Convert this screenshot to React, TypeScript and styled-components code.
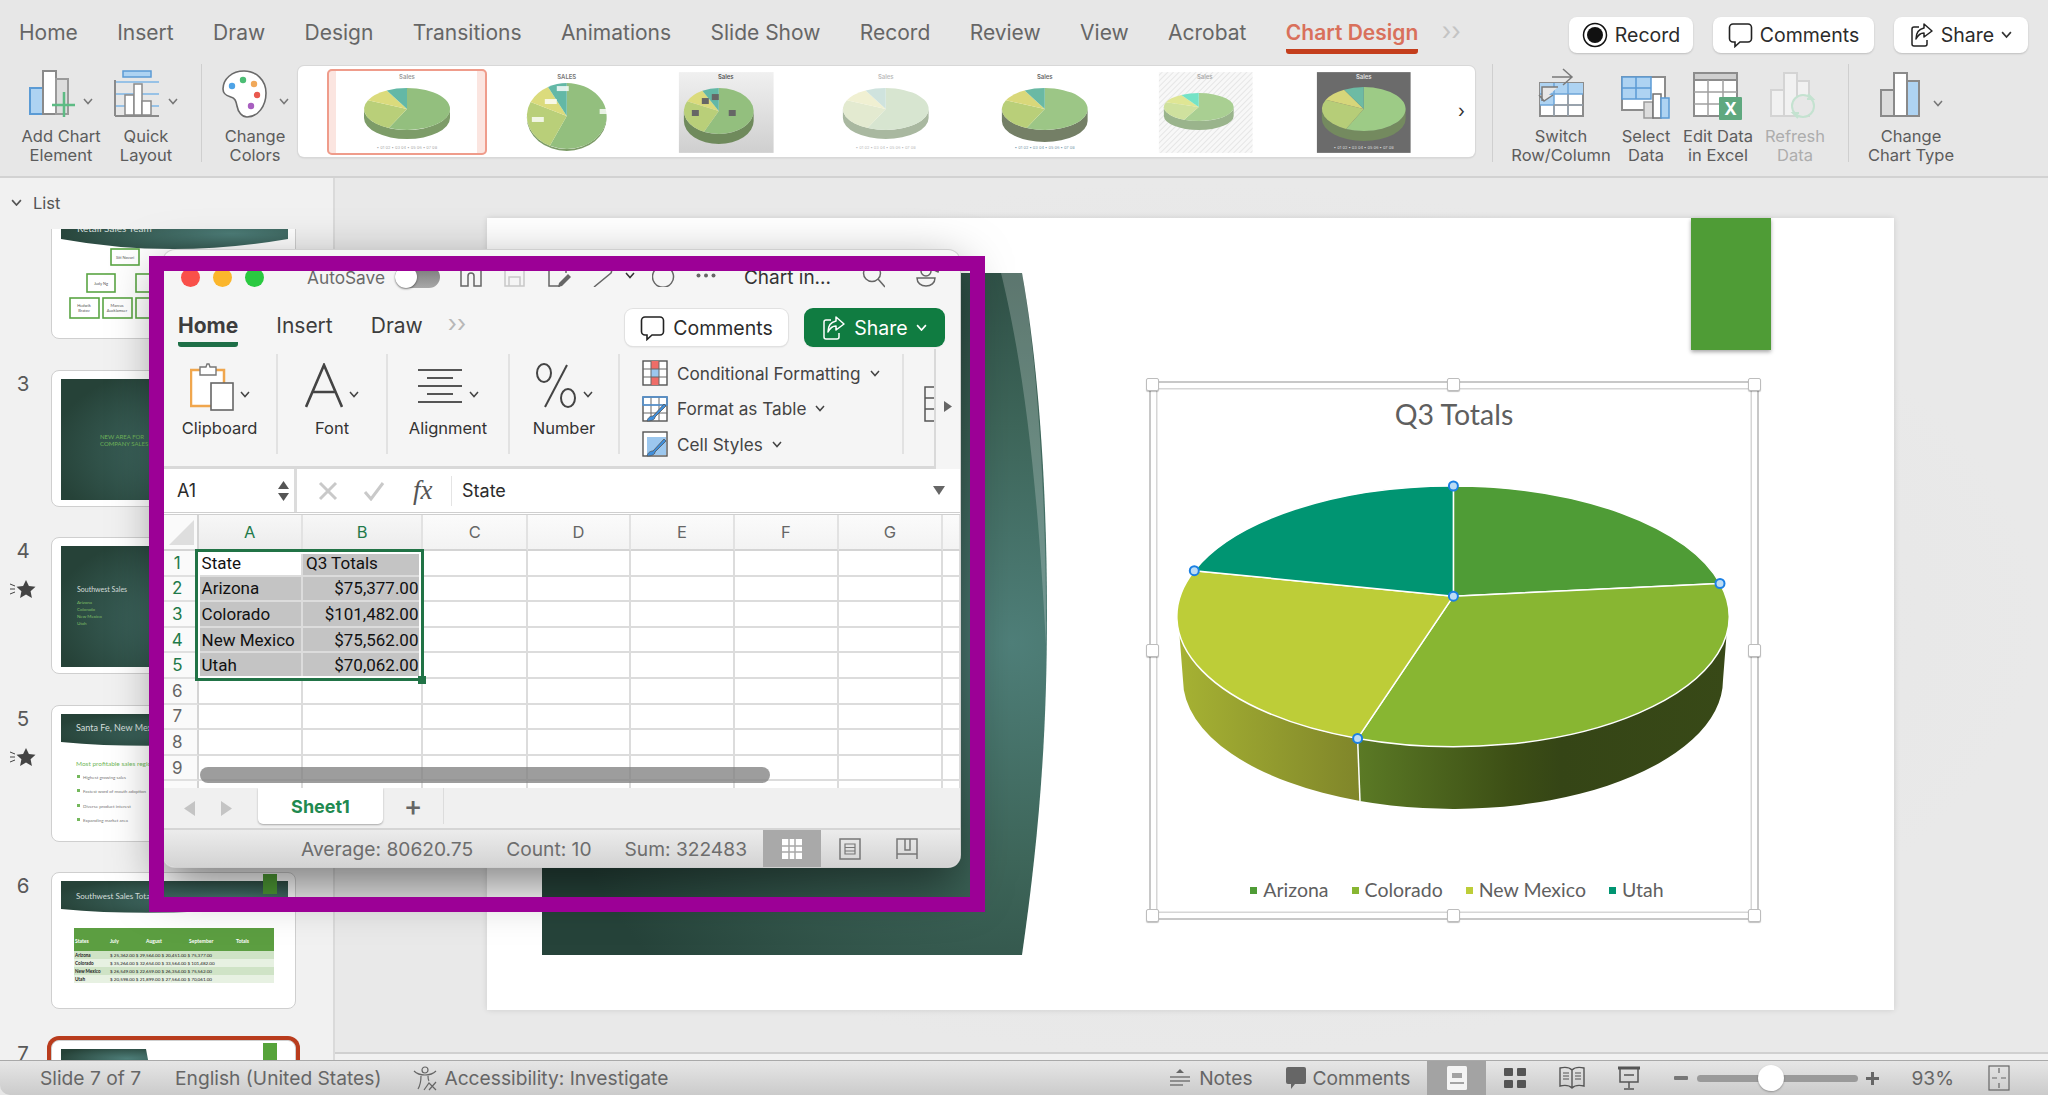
import styled, { createGlobalStyle } from 'styled-components'

const sans = 'Inter, Roboto, "Liberation Sans", sans-serif'

const GlobalStyle = createGlobalStyle`
  html, body {
    margin: 0;
    padding: 0;
    background: #e7e7e7;
    overflow: hidden;
  }
  * {
    box-sizing: border-box;
  }
`

const Page = styled.div`
  position: relative;
  width: 2048px;
  height: 1095px;
  display: flex;
  flex-direction: column;
  overflow: hidden;
  font-family: ${sans};
  color: #5c5c5c;
  background: #e7e7e7;
`

/* ---------- powerpoint top ---------- */

const TabRow = styled.div`
  height: 55px;
  flex: none;
  display: flex;
  align-items: flex-start;
  padding: 0 20px 0 19px;
`

const TabList = styled.div`
  display: flex;
  gap: 39.4px;
  flex: 1;
  padding-top: 20px;
`

const Tab = styled.div<{ $active?: boolean }>`
  position: relative;
  height: 34px;
  font-size: 21px;
  line-height: 25px;
  white-space: nowrap;
  color: ${(p) => (p.$active ? '#d9705b' : '#666')};
  font-weight: ${(p) => (p.$active ? 600 : 400)};
  border-bottom: ${(p) => (p.$active ? '5px solid #c43e1c' : '5px solid transparent')};
  border-radius: 0 0 3px 3px;
`

const MoreTabs = styled.div`
  color: #c4c4c4;
  font-size: 25px;
  line-height: 23px;
  margin-left: -16px;
`

const TopActions = styled.div`
  display: flex;
  gap: 20px;
  padding-top: 17px;
`

const PillButton = styled.div<{ $w: number }>`
  width: ${(p) => p.$w}px;
  height: 36px;
  display: flex;
  align-items: center;
  justify-content: center;
  gap: 7px;
  background: #fff;
  border-radius: 8px;
  box-shadow: 0 1px 2px rgba(0, 0, 0, 0.18);
  color: #2b2b2b;
  font-size: 19.5px;
`

const Ribbon = styled.div`
  height: 123px;
  flex: none;
  display: flex;
  align-items: flex-start;
  padding: 11px 0 0 21px;
  border-bottom: 2px solid #d2d2d2;
`

const RibbonDivider = styled.div<{ $ml: number; $mr: number }>`
  width: 1px;
  height: 98px;
  flex: none;
  margin: -2px ${(p) => p.$mr}px 0 ${(p) => p.$ml}px;
  background: #cfcfcf;
`

const RibbonBtn = styled.div<{ $w: number; $ml?: number; $off?: boolean }>`
  width: ${(p) => p.$w}px;
  margin-left: ${(p) => p.$ml || 0}px;
  flex: none;
  display: flex;
  flex-direction: column;
  align-items: center;
  color: ${(p) => (p.$off ? '#adadad' : '#5c5c5c')};
`

const RibbonIcon = styled.div<{ $top?: number }>`
  height: 61px;
  padding-top: ${(p) => p.$top ?? 4}px;
  display: flex;
  align-items: flex-start;
  justify-content: center;
`

const RibbonLabel = styled.div`
  font-size: 16.5px;
  line-height: 19px;
  text-align: center;
  white-space: nowrap;
`

const Gallery = styled.div`
  width: 1177px;
  height: 91px;
  margin-left: 15px;
  flex: none;
  display: flex;
  align-items: center;
  position: relative;
  padding-left: 29px;
  background: #fff;
  border-radius: 6px;
  box-shadow: 0 0 0 1px #d8d8d8, 0 1px 2px rgba(0, 0, 0, 0.15);
`

const GalleryCell = styled.div<{ $selected?: boolean }>`
  width: 159.5px;
  height: 86px;
  flex: none;
  padding: ${(p) => (p.$selected ? '0 9px' : '0')};
  background: ${(p) => (p.$selected ? '#fbe5e0' : 'transparent')};
  outline: ${(p) => (p.$selected ? '2px solid #ef9c8b' : 'none')};
  outline-offset: -2px;
  border-radius: 5px;
  display: flex;
  align-items: center;
  justify-content: center;
`

const GalleryNext = styled.div`
  position: absolute;
  right: 10px;
  top: 36px;
  color: #333;
  font-size: 18px;
  line-height: 18px;
`

/* ---------- body ---------- */

const Body = styled.div`
  flex: 1;
  min-height: 0;
  display: flex;
`

const SidePanel = styled.div`
  width: 335px;
  flex: none;
  display: flex;
  flex-direction: column;
  background: #f1f1f1;
  border-right: 2px solid #dadada;
`

const ListHeader = styled.div`
  height: 51px;
  flex: none;
  display: flex;
  align-items: center;
  gap: 11px;
  padding: 0 0 2px 11px;
  font-size: 16.5px;
  color: #555;
`

const SlideScroller = styled.div`
  flex: 1;
  min-height: 0;
  overflow: hidden;
`

const SlideList = styled.div`
  margin-top: -27px;
  display: flex;
  flex-direction: column;
  gap: 30.5px;
`

const SlideRow = styled.div`
  display: flex;
  height: 137px;
  flex: none;
`

const SlideNum = styled.div`
  width: 51px;
  flex: none;
  display: flex;
  flex-direction: column;
  align-items: center;
  padding: 2px 5px 0 0;
  font-size: 20.5px;
  line-height: 24px;
  color: #595959;
`

const SlideCard = styled.div<{ $selected?: boolean }>`
  width: 245px;
  height: 137px;
  padding: 8px 9px;
  background: #fff;
  border-radius: 8px;
  border: 1px solid #cfcfcf;
  box-shadow: ${(p) => (p.$selected ? '0 0 0 4px #b93c1d' : 'none')};
`

const StarMark = styled.div`
  display: flex;
  align-items: center;
  margin-top: 17px;
`

const ThumbSvg = styled.svg`
  display: block;
  overflow: visible;
`

const Main = styled.div`
  flex: 1;
  min-width: 0;
  display: flex;
  flex-direction: column;
  background: radial-gradient(ellipse at center, #e2e2e2 0%, #e9e9e9 70%);
`

const Canvas = styled.div`
  flex: 1;
  padding: 40px 0 0 152px;
`

const NotesEdge = styled.div`
  height: 8px;
  flex: none;
  background: #f1f1f1;
  border-top: 2px solid #d0d0d0;
`

const Slide = styled.div`
  position: relative;
  width: 1407px;
  height: 792px;
  background: #fff;
  box-shadow: 0 0 6px rgba(0, 0, 0, 0.12);
`

const SlideShape = styled.svg`
  position: absolute;
  left: 55px;
  top: 55px;
`

const GreenTab = styled.div`
  position: absolute;
  left: 1204px;
  top: 0;
  width: 80px;
  height: 132px;
  background: #4f9c36;
  box-shadow: 0 2px 4px rgba(0, 0, 0, 0.35);
`

const ChartFrame = styled.div`
  position: absolute;
  left: 662px;
  top: 163px;
  width: 610px;
  height: 539px;
  display: flex;
  flex-direction: column;
  align-items: center;
  background: #fff;
  border: 2px solid #c8c8c8;
  box-shadow: inset 0 0 0 5px #fff, inset 0 0 0 6.5px #d6d6d6;
`

const ChartTitle = styled.div`
  height: 85px;
  flex: none;
  padding-top: 11px;
  font-family: Lato, ${sans};
  font-size: 28.5px;
  line-height: 40px;
  color: #5f5f5f;
`

const Legend = styled.div`
  margin-top: 60px;
  display: flex;
  align-items: center;
  padding-left: 6px;
  gap: 23px;
`

const LegendItem = styled.div`
  display: flex;
  align-items: center;
  gap: 6px;
  font-family: Lato, ${sans};
  font-size: 19.5px;
  line-height: 24px;
  color: #5f5f5f;
`

const LegendSwatch = styled.span<{ $c: string }>`
  width: 7px;
  height: 7px;
  background: ${(p) => p.$c};
`

const HandleLayer = styled.div`
  position: absolute;
  inset: 2px;
`

const Handle = styled.div<{ $x: number; $y: number }>`
  position: absolute;
  left: ${(p) => p.$x}%;
  top: ${(p) => p.$y}%;
  width: 13px;
  height: 13px;
  margin: -7px 0 0 -7px;
  background: #fff;
  border: 1px solid #bdbdbd;
  border-radius: 2px;
  box-shadow: 0 1px 1px rgba(0, 0, 0, 0.25);
`

const StatusBar = styled.div`
  height: 35px;
  flex: none;
  display: flex;
  align-items: center;
  position: relative;
  z-index: 2;
  padding-left: 40px;
  background: linear-gradient(#e6e6e6, #cbcbcb);
  border-top: 1px solid #a9a9a9;
  border-radius: 0 0 0 10px;
  font-size: 19.2px;
  color: #666;
`

const StatusText = styled.div<{ $ml?: number }>`
  margin-left: ${(p) => p.$ml || 0}px;
  white-space: nowrap;
  display: flex;
  align-items: center;
  gap: 6px;
`

const StatusRight = styled.div`
  margin-left: auto;
  height: 100%;
  display: flex;
  align-items: center;
`

const ViewBox = styled.div<{ $w: number; $active?: boolean; $ml?: number; $mr?: number }>`
  width: ${(p) => p.$w}px;
  margin-left: ${(p) => p.$ml || 0}px;
  margin-right: ${(p) => p.$mr || 0}px;
  height: 100%;
  display: flex;
  align-items: center;
  justify-content: center;
  background: ${(p) => (p.$active ? '#a3a3a3' : 'transparent')};
`

const ZoomTrack = styled.div`
  position: relative;
  width: 161px;
  height: 7px;
  margin: 0 8px 0 9px;
  border-radius: 4px;
  background: #9a9a9a;
`

const ZoomKnob = styled.div`
  position: absolute;
  left: 61px;
  top: -10px;
  width: 26px;
  height: 26px;
  border-radius: 50%;
  background: #fff;
  box-shadow: 0 1px 2px rgba(0, 0, 0, 0.3);
`

/* ---------- excel window ---------- */

const ExcelWindow = styled.div`
  position: absolute;
  left: 163px;
  top: 250px;
  width: 797px;
  height: 617px;
  display: flex;
  flex-direction: column;
  overflow: hidden;
  background: #f5f5f5;
  border-radius: 12px;
  box-shadow: 0 0 0 1px #cfcfcf;
`

const WindowShadow = styled.div`
  position: absolute;
  left: 163px;
  top: 250px;
  width: 797px;
  height: 617px;
  border-radius: 12px;
  box-shadow: 0 18px 50px rgba(0, 0, 0, 0.5);
`

const PurpleFrame = styled.div`
  position: absolute;
  left: 149px;
  top: 256px;
  width: 836px;
  height: 656px;
  border: 15px solid #9c0096;
  pointer-events: none;
`

const TitleBar = styled.div`
  height: 54px;
  flex: none;
  display: flex;
  align-items: center;
  padding: 0 0 0 18px;
`

const Light = styled.span<{ $c: string }>`
  width: 19px;
  height: 19px;
  margin-right: 13px;
  border-radius: 50%;
  background: ${(p) => p.$c};
`

const AutoSave = styled.div`
  margin-left: 30px;
  font-size: 17.3px;
  color: #6a6a6a;
`

const Toggle = styled.div`
  position: relative;
  width: 45px;
  height: 22px;
  margin: 0 20px 0 10px;
  border-radius: 11px;
  background: linear-gradient(#777, #a8a8a8);
`

const ToggleKnob = styled.div`
  position: absolute;
  left: 0;
  top: 0;
  width: 22px;
  height: 22px;
  border-radius: 50%;
  background: #fff;
  box-shadow: 0 1px 2px rgba(0, 0, 0, 0.5);
`

const TitleIcons = styled.div`
  display: flex;
  align-items: center;
  gap: 21px;
  margin-bottom: 4px;
`

const DocTitle = styled.div`
  margin: 0 31px 0 28px;
  font-size: 19px;
  color: #333;
  white-space: nowrap;
`

const XTabRow = styled.div`
  height: 45px;
  flex: none;
  display: flex;
  align-items: flex-start;
  padding: 5px 0 0 15px;
`

const XTab = styled.div<{ $active?: boolean }>`
  height: 38px;
  margin-right: 38px;
  padding-top: 5px;
  font-size: 21px;
  line-height: 24px;
  font-weight: ${(p) => (p.$active ? 700 : 400)};
  color: #3d3d3d;
  border-bottom: 5px solid ${(p) => (p.$active ? '#1e6f47' : 'transparent')};
  border-radius: 0 0 3px 3px;
`

const XMore = styled.div`
  margin-left: -13px;
  padding-top: 3px;
  font-size: 24px;
  line-height: 24px;
  color: #b8b8b8;
`

const XActions = styled.div`
  margin-left: auto;
  padding-right: 16px;
  display: flex;
  gap: 17px;
`

const XButton = styled.div<{ $w: number; $green?: boolean }>`
  width: ${(p) => p.$w}px;
  height: 37px;
  display: flex;
  align-items: center;
  justify-content: center;
  gap: 8px;
  border-radius: 8px;
  font-size: 19.5px;
  color: ${(p) => (p.$green ? '#fff' : '#2b2b2b')};
  background: ${(p) => (p.$green ? '#107c41' : '#fff')};
  box-shadow: 0 0 0 1px ${(p) => (p.$green ? '#107c41' : '#e1e1e1')}, 0 1px 2px rgba(0, 0, 0, 0.15);
`

const XRibbonRow = styled.div`
  height: 120px;
  flex: none;
  display: flex;
  align-items: center;
`

const XRibbon = styled.div`
  width: 773px;
  height: 100%;
  flex: none;
  display: flex;
  align-items: center;
  overflow: hidden;
  border-right: 2px solid #d9d9d9;
  border-bottom: 3px solid #d9d9d9;
  padding-bottom: 7px;
`

const XRibbonNext = styled.div`
  margin: -6px 0 0 8px;
  display: flex;
`

const XGroup = styled.div<{ $w: number }>`
  width: ${(p) => p.$w}px;
  height: 100px;
  flex: none;
  display: flex;
  flex-direction: column;
  align-items: center;
  border-right: 2px solid #e2e2e2;
`

const XIconArea = styled.div`
  height: 64px;
  padding-top: 9px;
  display: flex;
  align-items: flex-start;
  gap: 6px;
`

const AlignWrap = styled.div`
  padding-top: 5px;
`

const XLabel = styled.div`
  font-size: 16.5px;
  line-height: 20px;
  color: #333;
  white-space: nowrap;
`

const XStyleList = styled.div`
  width: 284px;
  height: 100px;
  flex: none;
  padding: 9px 0 0 22px;
  display: flex;
  flex-direction: column;
  justify-content: center;
  gap: 11.5px;
  border-right: 2px solid #e2e2e2;
`

const XStyleItem = styled.div`
  height: 24px;
  display: flex;
  align-items: center;
  gap: 9px;
  font-size: 17.2px;
  color: #444;
  white-space: nowrap;
`

const XClippedIcon = styled.svg`
  margin-left: 20px;
  flex: none;
`

const FormulaBar = styled.div`
  height: 43px;
  flex: none;
  display: flex;
  align-items: center;
  background: #fff;
  font-size: 18px;
  color: #2b2b2b;
`

const NameBox = styled.div`
  width: 134px;
  height: 100%;
  flex: none;
  display: flex;
  align-items: center;
  justify-content: space-between;
  padding: 0 5px 0 14px;
  border-right: 3px solid #dcdcdc;
`

const Spinner = styled.div`
  display: flex;
  flex-direction: column;
  gap: 4px;
`

const FormulaTools = styled.div`
  width: 154px;
  flex: none;
  display: flex;
  align-items: center;
  padding-left: 21px;
  gap: 25px;
`

const FxLabel = styled.span`
  margin-left: 3px;
  font-family: "Liberation Serif", serif;
  font-style: italic;
  font-size: 27px;
  color: #555;
`

const FormulaValue = styled.div`
  flex: 1;
  height: 30px;
  display: flex;
  align-items: center;
  padding-left: 10px;
  border-left: 1px solid #e4e4e4;
`

const FormulaDrop = styled.div`
  width: 0;
  height: 0;
  margin-right: 15px;
  border-left: 6px solid transparent;
  border-right: 6px solid transparent;
  border-top: 9px solid #666;
`

const SheetWrap = styled.div`
  position: relative;
  height: 276px;
  flex: none;
  overflow: hidden;
  background: #fff;
  border-top: 3px double #cfcfcf;
`

const SheetGrid = styled.div`
  display: grid;
  grid-template-columns: 35.6px 104.4px 120.5px 104.5px 103px 104px 104px 104px 18px;
  grid-template-rows: 36px repeat(10, 25.6px);
`

const Corner = styled.div`
  position: relative;
  background: #fafafa;
  border-bottom: 2px solid #d4d4d4;
  border-right: 2px solid #d4d4d4;
  &::after {
    content: '';
    position: absolute;
    right: 3px;
    bottom: 4px;
    border-left: 25px solid transparent;
    border-bottom: 25px solid #dedede;
  }
`

const ColHead = styled.div<{ $on?: boolean }>`
  display: flex;
  align-items: center;
  justify-content: center;
  font-size: 16.5px;
  color: ${(p) => (p.$on ? '#1f7a4a' : '#666')};
  background: ${(p) => (p.$on ? 'linear-gradient(#f7f7f7, #ececec)' : 'linear-gradient(#fbfbfb, #f3f3f3)')};
  border-right: 2px solid #e2e2e2;
  border-bottom: 2px solid #d4d4d4;
`

const RowHead = styled.div<{ $on?: boolean }>`
  display: flex;
  align-items: center;
  justify-content: center;
  padding-right: 5px;
  font-size: 17px;
  color: ${(p) => (p.$on ? '#1f7a4a' : '#666')};
  background: #fafafa;
  border-right: 2px solid #d4d4d4;
  border-bottom: 2px solid #e0e0e0;
`

const Cell = styled.div<{ $sel?: boolean; $right?: boolean }>`
  display: flex;
  align-items: center;
  justify-content: ${(p) => (p.$right ? 'flex-end' : 'flex-start')};
  padding: 0 3px;
  font-family: Roboto, ${sans};
  font-size: 17px;
  color: #111;
  white-space: nowrap;
  background: ${(p) => (p.$sel ? '#c4c4c4' : '#fff')};
  border-right: 2px solid #dcdcdc;
  border-bottom: 2px solid #dcdcdc;
`

const Selection = styled.div`
  position: absolute;
  left: 32px;
  top: 34px;
  width: 229px;
  height: 132px;
  border: 3px solid #217346;
  box-shadow: inset 0 0 0 2px #fff;
`

const FillHandle = styled.div`
  position: absolute;
  right: -5px;
  bottom: -6px;
  width: 8px;
  height: 8px;
  background: #217346;
`

const HScroll = styled.div`
  position: absolute;
  left: 37px;
  top: 252px;
  width: 570px;
  height: 16px;
  border-radius: 8px;
  background: rgba(130, 130, 130, 0.78);
`

const SheetTabs = styled.div`
  height: 42px;
  flex: none;
  display: flex;
  align-items: flex-start;
  background: #f0f0f0;
  border-bottom: 2px solid #d5d5d5;
`

const TabArrows = styled.div`
  width: 95px;
  height: 40px;
  flex: none;
  display: flex;
  align-items: center;
  padding-left: 21px;
  gap: 26px;
`

const SheetTab = styled.div`
  width: 125px;
  height: 36px;
  display: flex;
  align-items: center;
  justify-content: center;
  background: #fff;
  border-radius: 0 0 5px 5px;
  box-shadow: 0 1px 2px rgba(0, 0, 0, 0.3);
  font-size: 18px;
  font-weight: 700;
  color: #1f8a50;
`

const AddSheet = styled.div`
  width: 61px;
  height: 36px;
  display: flex;
  align-items: center;
  justify-content: center;
  border-right: 1px solid #dcdcdc;
  font-size: 28px;
  font-weight: 500;
  color: #666;
`

const XStatus = styled.div`
  flex: 1;
  display: flex;
  align-items: stretch;
  padding-left: 138px;
  background: linear-gradient(#ececec, #d3d3d3);
  font-size: 19.2px;
  color: #6d6d6d;
`

const XStatusText = styled.div<{ $mr: number }>`
  margin-right: ${(p) => p.$mr}px;
  display: flex;
  align-items: center;
  white-space: nowrap;
`

const XView = styled.div<{ $active?: boolean }>`
  width: ${(p) => (p.$active ? 58 : 57)}px;
  flex: none;
  display: flex;
  align-items: center;
  justify-content: center;
  background: ${(p) => (p.$active ? '#a9a9a9' : 'transparent')};
`

const ChevNear = styled.div<{ $gap?: number }>`
  display: flex;
  align-items: flex-start;
  gap: ${(p) => p.$gap ?? 8}px;
`

const ChevDrop = styled.div`
  padding-top: 19px;
`

const UndoChev = styled.div`
  margin: 0 -4px 0 -10px;
  display: flex;
`

/* ---------- drawings ---------- */

const Chevron = ({ c = '#666', s = 10 }: { c?: string; s?: number }) => (
  <svg width={s} height={s * 0.7} viewBox="0 0 10 7" style={{ flex: 'none' }}>
    <path d="M1 1l4 4.5L9 1" fill="none" stroke={c} strokeWidth="1.5" />
  </svg>
)

const Bubble = ({ c = '#222' }: { c?: string }) => (
  <svg width="25" height="26" viewBox="0 0 25 26">
    <path d="M5 2h15a3.5 3.5 0 0 1 3.5 3.5v11a3.5 3.5 0 0 1-3.5 3.5H12l-5 4.5V20H5a3.5 3.5 0 0 1-3.5-3.5v-11A3.5 3.5 0 0 1 5 2z" fill="none" stroke={c} strokeWidth="1.6" />
  </svg>
)

const ShareGlyph = ({ c = '#222' }: { c?: string }) => (
  <svg width="24" height="26" viewBox="0 0 24 26">
    <path d="M9 5H4a2 2 0 0 0-2 2v15a2 2 0 0 0 2 2h11a2 2 0 0 0 2-2v-4" fill="none" stroke={c} strokeWidth="1.5" />
    <path d="M14 2l8 7-8 6v-4c-4 0-6 2-8 6 0-6 3-10 8-11z" fill="none" stroke={c} strokeWidth="1.5" strokeLinejoin="round" />
  </svg>
)

const Bars = ({ a, b, c, s = '#8a8a8a' }: { a: string; b: string; c: string; s?: string }) => (
  <>
    <rect x="1" y="18" width="13" height="26" fill={a} stroke={s} strokeWidth="2" />
    <rect x="14" y="1" width="13" height="43" fill={b} stroke={s} strokeWidth="2" />
    <rect x="27" y="9" width="12" height="35" fill={c} stroke={s} strokeWidth="2" />
  </>
)

const AddChartIcon = () => (
  <svg width="46" height="48" viewBox="0 0 46 48">
    <rect x="1" y="18" width="14" height="26" fill="#aed3f2" stroke="#5b9bd5" strokeWidth="2" />
    <rect x="14" y="1" width="13" height="43" fill="#fff" stroke="#8a8a8a" strokeWidth="2" />
    <rect x="27" y="9" width="12" height="35" fill="#ddd" stroke="#9a9a9a" strokeWidth="2" />
    <path d="M35 22v25M23 35h24" stroke="#5dbb84" strokeWidth="2.5" />
  </svg>
)

const QuickLayoutIcon = () => (
  <svg width="46" height="48" viewBox="0 0 46 48">
    <rect x="9" y="1" width="28" height="6" fill="#aed3f2" stroke="#5b9bd5" strokeWidth="1.5" />
    <path d="M1 12h44M1 24h44M1 36h44" stroke="#7fb7e6" strokeWidth="1.5" />
    <path d="M1 10v36" stroke="#8a8a8a" strokeWidth="2" />
    <rect x="11" y="25" width="9" height="20" fill="#fff" stroke="#8a8a8a" strokeWidth="1.5" />
    <rect x="20" y="14" width="8" height="31" fill="#fff" stroke="#8a8a8a" strokeWidth="1.5" />
    <rect x="28" y="31" width="9" height="14" fill="#fff" stroke="#8a8a8a" strokeWidth="1.5" />
    <path d="M1 46h44" stroke="#8a8a8a" strokeWidth="2" />
  </svg>
)

const PaletteIcon = () => (
  <svg width="46" height="48" viewBox="0 0 46 48">
    <path d="M22 1C10 1 1 9 1 19c0 6 5 7 8 8 4 1 5 4 6 9 1 6 5 11 10 11 11 0 19-11 19-24S34 1 22 1z" fill="#fff" stroke="#6a6a6a" strokeWidth="1.6" />
    <circle cx="10" cy="16" r="3.2" fill="#4ea3e6" />
    <circle cx="21" cy="10" r="3.2" fill="#4cbd74" />
    <circle cx="32" cy="14" r="3.2" fill="#f0a85a" />
    <circle cx="35" cy="25" r="3.2" fill="#e9594e" />
    <circle cx="29" cy="36" r="3.2" fill="#a85fc0" />
  </svg>
)

const SwitchIcon = () => (
  <svg width="46" height="50" viewBox="0 0 46 50">
    <rect x="2" y="16" width="43" height="33" fill="#fff" stroke="#8c8c8c" strokeWidth="2" />
    <path d="M2 16h43v11H16v11H2z" fill="#aed3f2" />
    <path d="M2 27h43M2 38h43M16 16v33M30 16v33" stroke="#6ea5d8" strokeWidth="1.5" />
    <path d="M16 38v11M30 27v22M16 38h29" stroke="#9c9c9c" strokeWidth="1.5" />
    <path d="M4 34V20h16M15 28l-9 6-5-6" fill="#e7e7e7" stroke="#7a7a7a" strokeWidth="1.5" />
    <path d="M14 10h19M25 2l9 8-9 8" fill="none" stroke="#7a7a7a" strokeWidth="1.5" />
  </svg>
)

const SelectDataIcon = () => (
  <svg width="50" height="44" viewBox="0 0 50 44">
    <rect x="1" y="1" width="43" height="33" fill="#fff" stroke="#8c8c8c" strokeWidth="2" />
    <rect x="1" y="1" width="29" height="22" fill="#aed3f2" stroke="#5b9bd5" strokeWidth="1.5" />
    <path d="M15 1v22M1 12h29" stroke="#5b9bd5" strokeWidth="1.5" />
    <rect x="23" y="26" width="9" height="16" fill="#ddd" stroke="#9a9a9a" strokeWidth="1.5" />
    <rect x="32" y="18" width="8" height="24" fill="#fff" stroke="#707070" strokeWidth="1.5" />
    <rect x="40" y="22" width="8" height="20" fill="#aed3f2" stroke="#5b9bd5" strokeWidth="1.5" />
  </svg>
)

const EditDataIcon = () => (
  <svg width="50" height="49" viewBox="0 0 50 49">
    <rect x="1" y="1" width="43" height="43" fill="#fff" stroke="#8c8c8c" strokeWidth="2" />
    <rect x="1" y="1" width="43" height="7" fill="#cfcfcf" stroke="#8c8c8c" strokeWidth="2" />
    <path d="M1 20h43M1 32h43M15 8v36M30 8v36" stroke="#a0a0a0" strokeWidth="1.5" />
    <rect x="26" y="25" width="23" height="23" rx="1" fill="#5fa87f" />
    <text x="37.5" y="43" textAnchor="middle" fontSize="17" fontWeight="700" fill="#fff" fontFamily="Inter, sans-serif">X</text>
  </svg>
)

const RefreshIcon = () => (
  <svg width="50" height="49" viewBox="0 0 50 49">
    <Bars a="#f1f1f1" b="#f1f1f1" c="#f1f1f1" s="#d4d4d4" />
    <circle cx="33" cy="34" r="11" fill="#e7e7e7" stroke="#c4e2d0" strokeWidth="2" />
    <path d="M38 22l5 5h-6M28 46l-5-5h6" fill="none" stroke="#c4e2d0" strokeWidth="2" />
  </svg>
)

const ClipboardIcon = () => (
  <svg width="44" height="48" viewBox="0 0 44 48">
    <rect x="1" y="7" width="33" height="36" fill="#fff" stroke="#f0a64d" strokeWidth="2.5" />
    <path d="M10 4h6l1-3h2l1 3h6v8H10z" fill="#fff" stroke="#777" strokeWidth="1.4" />
    <rect x="21" y="20" width="22" height="27" fill="#fff" stroke="#666" strokeWidth="1.6" />
  </svg>
)

const AlignIcon = () => (
  <svg width="46" height="36" viewBox="0 0 46 36">
    <path d="M1 2h44M10 10h26M1 18h44M10 26h26M1 34h44" stroke="#555" strokeWidth="2" />
  </svg>
)

const StyleIcon = ({ kind }: { kind: 'cond' | 'table' | 'cell' }) => (
  <svg width="26" height="26" viewBox="0 0 26 26">
    <rect x="1" y="1" width="24" height="24" fill="#fff" stroke="#555" strokeWidth="1.4" />
    {kind === 'cond' && <path d="M9 1h8v8H9zM9 17h8v8H9z" fill="#ee6d68" />}
    {kind === 'cond' && <path d="M9 9h8v8H9z" fill="#9cc7ee" />}
    {kind === 'cell' && <rect x="5" y="6" width="19" height="18" fill="#9cc7ee" />}
    {kind !== 'cell' && <path d="M1 9h24M1 17h24M9 1v24M17 1v24" stroke="#666" strokeWidth="1" />}
    {kind === 'table' && <path d="M1 1h24v8H1z" fill="none" stroke="#4f93d6" strokeWidth="1.4" />}
    {kind !== 'cond' && <path d="M22 8L11 20c-2 0-5 1-6 5 4 0 8-1 8-4L24 10z" fill="#3f8fdc" stroke="#555" strokeWidth="0.8" />}
  </svg>
)

const Tri = ({ dir, c = '#bbb', w, h }: { dir: 'l' | 'r' | 'u' | 'd'; c?: string; w: number; h: number }) => {
  const pts = { l: '100,0 100,100 0,50', r: '0,0 0,100 100,50', u: '0,100 100,100 50,0', d: '0,0 100,0 50,100' }[dir]
  return (
    <svg width={w} height={h} viewBox="0 0 100 100" preserveAspectRatio="none">
      <polygon points={pts} fill={c} />
    </svg>
  )
}

type PieProps = {
  cx: number
  cy: number
  rx: number
  ry: number
  depth: number
  colors: string[]
  side: string
  stops?: number[]
}

const pt = (p: PieProps, deg: number) => {
  const a = ((deg - 90) * Math.PI) / 180
  return `${(p.cx + p.rx * Math.cos(a)).toFixed(2)} ${(p.cy + p.ry * Math.sin(a)).toFixed(2)}`
}

// little pie used in the chart style gallery
const MiniPie = (p: PieProps) => {
  const stops = p.stops || [0, 205, 295, 332, 360]
  return (
    <>
      <path
        d={`M${p.cx - p.rx} ${p.cy}A${p.rx} ${p.ry} 0 0 0 ${p.cx + p.rx} ${p.cy}v${p.depth}A${p.rx} ${p.ry} 0 0 1 ${p.cx - p.rx} ${p.cy + p.depth}z`}
        fill={p.side}
      />
      {p.colors.map((c, i) => (
        <path
          key={i}
          d={`M${p.cx} ${p.cy}L${pt(p, stops[i])}A${p.rx} ${p.ry} 0 ${stops[i + 1] - stops[i] > 180 ? 1 : 0} 1 ${pt(p, stops[i + 1])}z`}
          fill={c}
        />
      ))}
    </>
  )
}

const galleryGreen = ['#93bf7e', '#b9cf79', '#dbdb7c', '#63b8a6']

const MiniLegend = ({ y, c, x = 80 }: { y: number; c: string; x?: number }) => (
  <text x={x} y={y} textAnchor="middle" fontSize="4" fill={c} fontFamily="Inter, sans-serif">
    ▪ 01 02 ▪ 03 04 ▪ 05 06 ▪ 07 08
  </text>
)

const MiniTitle = ({ x = 80, c = '#999', t = 'Sales' }: { x?: number; c?: string; t?: string }) => (
  <text x={x} y="10" textAnchor="middle" fontSize="6" fontWeight="600" fill={c} fontFamily="Inter, sans-serif">
    {t}
  </text>
)

const GalleryThumb = ({ n }: { n: number }) => {
  if (n === 1)
    return (
      <svg width="141" height="84" viewBox="9 1 141 84">
        <rect x="9" y="0" width="141" height="86" fill="#fff" />
        <MiniTitle />
        <MiniPie cx={80} cy={40} rx={43} ry={21} depth={9} colors={galleryGreen} side="#7d9c68" />
        <MiniLegend y={80} c="#aaa" />
      </svg>
    )
  if (n === 2)
    return (
      <svg width="160" height="86" viewBox="0 0 160 86">
        <MiniTitle t="SALES" c="#777" />
        <MiniPie cx={80} cy={47} rx={40} ry={33} depth={2} colors={galleryGreen} side="#7d9c68" />
        <rect x="113" y="40" width="10" height="5" fill="#fff" opacity="0.8" />
        <rect x="45" y="48" width="12" height="5" fill="#fff" opacity="0.8" />
        <rect x="58" y="30" width="12" height="5" fill="#fff" opacity="0.8" />
        <rect x="70" y="17" width="12" height="5" fill="#fff" opacity="0.8" />
      </svg>
    )
  if (n === 3)
    return (
      <svg width="160" height="86" viewBox="0 0 160 86">
        <defs>
          <linearGradient id="thumbGrey" x1="0" y1="0" x2="0" y2="1">
            <stop offset="0" stopColor="#f0f0f0" />
            <stop offset="1" stopColor="#cfcfcf" />
          </linearGradient>
        </defs>
        <rect x="33" y="3" width="95" height="81" fill="url(#thumbGrey)" />
        <MiniTitle c="#555" />
        <MiniPie cx={73} cy={42} rx={35} ry={23} depth={10} colors={galleryGreen} side="#6f8a5c" />
        <rect x="83" y="41" width="7" height="6" fill="#666" />
        <rect x="46" y="41" width="7" height="6" fill="#666" />
        <rect x="56" y="29" width="7" height="6" fill="#666" />
        <rect x="66" y="25" width="7" height="6" fill="#666" />
      </svg>
    )
  if (n === 4)
    return (
      <svg width="160" height="86" viewBox="0 0 160 86">
        <MiniTitle c="#bbb" />
        <MiniPie cx={80} cy={40} rx={43} ry={21} depth={9} colors={['#d7e5d0', '#e3ead0', '#f0f0d2', '#cfe3de']} side="#a9b8a0" />
        <MiniLegend y={80} c="#bbb" />
      </svg>
    )
  if (n === 5)
    return (
      <svg width="160" height="86" viewBox="0 0 160 86">
        <MiniTitle c="#666" />
        <MiniPie cx={80} cy={40} rx={43} ry={21} depth={12} colors={['#9cc686', '#b9cf79', '#d9d87a', '#6ab9a4']} side="#747f66" />
        <MiniLegend y={80} c="#79a" />
      </svg>
    )
  if (n === 6)
    return (
      <svg width="160" height="86" viewBox="0 0 160 86">
        <defs>
          <pattern id="thumbHatch" width="4" height="4" patternUnits="userSpaceOnUse" patternTransform="rotate(45)">
            <rect width="4" height="4" fill="#f8f8f8" />
            <rect width="1" height="4" fill="#e6e6e6" />
          </pattern>
        </defs>
        <rect x="34" y="3" width="94" height="81" fill="url(#thumbHatch)" />
        <MiniTitle c="#aaa" />
        <MiniPie cx={74} cy={38} rx={35} ry={14} depth={9} colors={['#a9cf92', '#cfe19e', '#dfe694', '#74e3c6']} side="#9ab48c" stops={[0, 205, 290, 330, 360]} />
      </svg>
    )
  return (
    <svg width="160" height="86" viewBox="0 0 160 86">
      <rect x="33" y="3" width="94" height="81" fill="#6b6b6b" />
      <MiniTitle c="#e2e2e2" />
      <MiniPie cx={80} cy={40} rx={42} ry={22} depth={10} colors={['#9dcb86', '#b6cd78', '#d6d67a', '#6dbba4']} side="#748a5f" />
      <MiniLegend y={80} c="#ddd" />
    </svg>
  )
}

const SlideThumb = ({ n }: { n: number }) => (
  <ThumbSvg width="227" height="121" viewBox="0 0 227 121">
    <defs>
      <radialGradient id={`teal${n}`} cx="0.75" cy="0.6" r="0.8">
        <stop offset="0" stopColor="#4d7d78" />
        <stop offset="1" stopColor="#264238" />
      </radialGradient>
    </defs>
    {(n === 3 || n === 4) && <rect width="227" height="121" fill={`url(#teal${n})`} />}
    {n === 3 && (
      <text x="39" y="60" fontSize="6" fill="#6fb35a" fontFamily="Lato, sans-serif">
        NEW AREA FOR
        <tspan x="39" dy="7">COMPANY SALES</tspan>
      </text>
    )}
    {n === 4 && (
      <>
        <text x="16" y="46" fontSize="7" fill="#d5dedb" fontFamily="Lato, sans-serif">Southwest Sales</text>
        <text x="16" y="58" fontSize="4.5" fill="#7fbf66" fontFamily="Lato, sans-serif">
          Arizona
          <tspan x="16" dy="7">Colorado</tspan>
          <tspan x="16" dy="7">New Mexico</tspan>
          <tspan x="16" dy="7">Utah</tspan>
        </text>
        <path d="M200 0h14q12 60 0 121h-14z" fill="#6b8f85" />
      </>
    )}
    {(n === 2 || n === 5 || n === 6 || n === 7) && (
      <path
        d={n === 7 ? 'M0 0h85l3 16H0z' : n === 2 ? 'M0 0h227v28Q110 48 0 28z' : 'M0 0h227v22Q110 38 0 28z'}
        fill={`url(#teal${n})`}
      />
    )}
    {n === 2 && (
      <>
        <text x="16" y="21" fontSize="10" fill="#d5dedb" fontFamily="Lato, sans-serif">Retail Sales Team</text>
        <g fill="#fff" stroke="#5aa544" strokeWidth="1.6">
          <rect x="50" y="38" width="28" height="16" />
          <rect x="26" y="63" width="28" height="18" />
          <rect x="75" y="63" width="28" height="18" />
          <rect x="9" y="87" width="29" height="20" />
          <rect x="42" y="87" width="29" height="20" />
          <rect x="75" y="87" width="29" height="20" />
        </g>
        <g fontSize="4" fill="#555" textAnchor="middle" fontFamily="Lato, sans-serif">
          <text x="64" y="48">Siti Novari</text>
          <text x="40" y="74">Judy Ng</text>
          <text x="23" y="96">Hedwik</text>
          <text x="23" y="101">Bratov</text>
          <text x="56" y="96">Marcus</text>
          <text x="56" y="101">Aucklamser</text>
        </g>
      </>
    )}
    {n === 5 && (
      <>
        <text x="15" y="17" fontSize="9" fill="#d5dedb" fontFamily="Lato, sans-serif">Santa Fe, New Mexico</text>
        <text x="15" y="52" fontSize="6.5" fill="#74b85c" fontFamily="Lato, sans-serif">Most profitable sales region</text>
        <g fontSize="4.5" fill="#777" fontFamily="Lato, sans-serif">
          <text x="22" y="65">Highest growing sales</text>
          <text x="22" y="79">Fastest word of mouth adoption</text>
          <text x="22" y="94">Diverse product interest</text>
          <text x="22" y="108">Expanding market area</text>
        </g>
        <g fill="#74b85c">
          <rect x="16" y="61" width="3" height="3" />
          <rect x="16" y="75" width="3" height="3" />
          <rect x="16" y="90" width="3" height="3" />
          <rect x="16" y="104" width="3" height="3" />
        </g>
      </>
    )}
    {n === 6 && (
      <>
        <text x="15" y="18" fontSize="8" fill="#d5dedb" fontFamily="Lato, sans-serif">Southwest Sales Totals</text>
        <rect x="202" y="-7" width="14" height="20" fill="#4f9c36" />
        <rect x="13" y="47" width="200" height="23" fill="#5c9e41" />
        <rect x="13" y="70" width="200" height="8" fill="#cfe3c6" />
        <rect x="13" y="78" width="200" height="8" fill="#e7f1e2" />
        <rect x="13" y="86" width="200" height="8" fill="#cfe3c6" />
        <rect x="13" y="94" width="200" height="8" fill="#e7f1e2" />
        <g fontSize="5" fontWeight="700" fill="#fff" fontFamily="Lato, sans-serif">
          <text x="14" y="62">States</text>
          <text x="49" y="62">July</text>
          <text x="85" y="62">August</text>
          <text x="128" y="62">September</text>
          <text x="175" y="62">Totals</text>
        </g>
        <g fontSize="4.6" fill="#222" fontFamily="Lato, sans-serif">
          <text x="14" y="76" fontWeight="700">Arizona</text>
          <text x="49" y="76">$ 25,362.00   $ 29,564.00   $ 20,451.00   $ 75,377.00</text>
          <text x="14" y="84" fontWeight="700">Colorado</text>
          <text x="49" y="84">$ 35,264.00   $ 32,654.00   $ 33,564.00   $ 101,482.00</text>
          <text x="14" y="92" fontWeight="700">New Mexico</text>
          <text x="49" y="92">$ 26,549.00   $ 22,659.00   $ 26,354.00   $ 75,562.00</text>
          <text x="14" y="100" fontWeight="700">Utah</text>
          <text x="49" y="100">$ 20,598.00   $ 21,899.00   $ 27,564.00   $ 70,061.00</text>
        </g>
      </>
    )}
    {n === 7 && <rect x="202" y="-6" width="14" height="30" fill="#56a33a" />}
  </ThumbSvg>
)

const Star = () => (
  <svg width="26" height="18" viewBox="0 0 26 18">
    <path d="M0 4l5 2M0 9h5M0 14l5-2" stroke="#444" strokeWidth="1" />
    <path d="M16 0l2.9 6 6.6.8-4.9 4.5 1.3 6.6-5.9-3.3-5.9 3.3 1.3-6.6-4.9-4.5 6.6-.8z" fill="#444" />
  </svg>
)

const Pie3D = () => {
  const handles = [
    [1453.4, 486],
    [1720, 583.5],
    [1357.6, 738.4],
    [1194.3, 570.7],
    [1453.4, 596.2],
  ]
  return (
    <svg width="598" height="350" viewBox="1155 468 598 350" style={{ flex: 'none' }}>
      <defs>
        <linearGradient id="sideL" x1="1178" y1="0" x2="1358" y2="0" gradientUnits="userSpaceOnUse">
          <stop offset="0" stopColor="#a6b233" />
          <stop offset="1" stopColor="#80862a" />
        </linearGradient>
        <linearGradient id="sideR" x1="1358" y1="0" x2="1728" y2="0" gradientUnits="userSpaceOnUse">
          <stop offset="0" stopColor="#5b7a25" />
          <stop offset="0.42" stopColor="#3c4e15" />
          <stop offset="0.55" stopColor="#354516" />
          <stop offset="1" stopColor="#384917" />
        </linearGradient>
      </defs>
      <path d="M1178 616A275 130 0 0 0 1357.6 738.4L1360 801A270 129 0 0 1 1183 680Z" fill="url(#sideL)" />
      <path d="M1357.6 738.4A275 130 0 0 0 1728 616L1723 680A270 129 0 0 1 1360 801Z" fill="url(#sideR)" />
      <path d="M1357.6 738.4L1360 801" stroke="#fff" strokeWidth="1.5" />
      <g stroke="#fff" strokeWidth="1.5" strokeLinejoin="round">
        <path d="M1453.4 596.2L1453.4 486A275 130 0 0 1 1720 583.5Z" fill="#4f9c36" />
        <path d="M1453.4 596.2L1720 583.5A275 130 0 0 1 1357.6 738.4Z" fill="#88b632" />
        <path d="M1453.4 596.2L1357.6 738.4A275 130 0 0 1 1194.3 570.7Z" fill="#bdcd38" />
        <path d="M1453.4 596.2L1194.3 570.7A275 130 0 0 1 1453.4 486Z" fill="#009572" />
      </g>
      {handles.map(([x, y]) => (
        <circle key={x} cx={x} cy={y} r="4.5" fill="#bcdcf5" stroke="#1b80e4" strokeWidth="2" />
      ))}
    </svg>
  )
}

const ribbonLeft = [
  { w: 80, ml: 0, icon: <AddChartIcon />, text: ['Add Chart', 'Element'] },
  { w: 60, ml: 15, icon: <QuickLayoutIcon />, text: ['Quick', 'Layout'] },
]

const rows = [
  ['State', 'Q3 Totals'],
  ['Arizona', '$75,377.00'],
  ['Colorado', '$101,482.00'],
  ['New Mexico', '$75,562.00'],
  ['Utah', '$70,062.00'],
]

const tabs = ['Home', 'Insert', 'Draw', 'Design', 'Transitions', 'Animations', 'Slide Show', 'Record', 'Review', 'View', 'Acrobat']

const legend = [
  ['Arizona', '#4f9c36'],
  ['Colorado', '#88b632'],
  ['New Mexico', '#bdcd38'],
  ['Utah', '#009572'],
]

const SheetRow = ({ r }: { r: number }) => {
  const data = rows[r]
  return (
    <>
      <RowHead $on={r < 5}>{r < 9 ? r + 1 : ''}</RowHead>
      <Cell $sel={r > 0 && r < 5}>{data ? data[0] : ''}</Cell>
      <Cell $sel={r < 5} $right={r > 0}>
        {data ? data[1] : ''}
      </Cell>
      {Array.from({ length: 6 }).map((_, i) => (
        <Cell key={i} />
      ))}
    </>
  )
}

const App = () => {
  return (
    <Page>
      <GlobalStyle />
      <TabRow>
        <TabList>
          {tabs.map((t) => (
            <Tab key={t}>{t}</Tab>
          ))}
          <Tab $active>Chart Design</Tab>
          <MoreTabs>››</MoreTabs>
        </TabList>
        <TopActions>
          <PillButton $w={124}>
            <svg width="26" height="26" viewBox="0 0 26 26">
              <circle cx="13" cy="13" r="11.5" fill="none" stroke="#111" strokeWidth="1.5" />
              <circle cx="13" cy="13" r="8" fill="#111" />
            </svg>
            Record
          </PillButton>
          <PillButton $w={161}>
            <Bubble />
            Comments
          </PillButton>
          <PillButton $w={134}>
            <ShareGlyph />
            Share
            <Chevron c="#333" s={11} />
          </PillButton>
        </TopActions>
      </TabRow>

      <Ribbon>
        {ribbonLeft.map((b) => (
          <RibbonBtn key={b.text[0]} $w={b.w} $ml={b.ml}>
            <RibbonIcon>
              <ChevNear>
                {b.icon}
                <ChevDrop>
                  <Chevron c="#777" />
                </ChevDrop>
              </ChevNear>
            </RibbonIcon>
            <RibbonLabel>
              {b.text[0]}
              <br />
              {b.text[1]}
            </RibbonLabel>
          </RibbonBtn>
        ))}
        <RibbonDivider $ml={25} $mr={25} />
        <RibbonBtn $w={56}>
          <RibbonIcon>
            <ChevNear $gap={11}>
              <PaletteIcon />
              <ChevDrop>
                <Chevron c="#777" />
              </ChevDrop>
            </ChevNear>
          </RibbonIcon>
          <RibbonLabel>
            Change
            <br />
            Colors
          </RibbonLabel>
        </RibbonBtn>
        <Gallery>
          {[1, 2, 3, 4, 5, 6, 7].map((n) => (
            <GalleryCell key={n} $selected={n === 1}>
              <GalleryThumb n={n} />
            </GalleryCell>
          ))}
          <GalleryNext>›</GalleryNext>
        </Gallery>
        <RibbonDivider $ml={17} $mr={18} />
        <RibbonBtn $w={100}>
          <RibbonIcon $top={1}>
            <SwitchIcon />
          </RibbonIcon>
          <RibbonLabel>
            Switch
            <br />
            Row/Column
          </RibbonLabel>
        </RibbonBtn>
        <RibbonBtn $w={50} $ml={10}>
          <RibbonIcon $top={10}>
            <SelectDataIcon />
          </RibbonIcon>
          <RibbonLabel>
            Select
            <br />
            Data
          </RibbonLabel>
        </RibbonBtn>
        <RibbonBtn $w={74} $ml={10}>
          <RibbonIcon $top={6}>
            <EditDataIcon />
          </RibbonIcon>
          <RibbonLabel>
            Edit Data
            <br />
            in Excel
          </RibbonLabel>
        </RibbonBtn>
        <RibbonBtn $w={62} $ml={9} $off>
          <RibbonIcon $top={6}>
            <RefreshIcon />
          </RibbonIcon>
          <RibbonLabel>
            Refresh
            <br />
            Data
          </RibbonLabel>
        </RibbonBtn>
        <RibbonDivider $ml={22} $mr={17} />
        <RibbonBtn $w={90}>
          <RibbonIcon $top={6}>
            <ChevNear $gap={13}>
              <svg width="40" height="46" viewBox="0 0 40 46">
                <Bars a="#dcdcdc" b="#fff" c="#aed3f2" />
              </svg>
              <ChevDrop>
                <Chevron c="#777" />
              </ChevDrop>
            </ChevNear>
          </RibbonIcon>
          <RibbonLabel>
            Change
            <br />
            Chart Type
          </RibbonLabel>
        </RibbonBtn>
      </Ribbon>

      <Body>
        <SidePanel>
          <ListHeader>
            <Chevron c="#555" s={11} />
            List
          </ListHeader>
          <SlideScroller>
            <SlideList>
              {[2, 3, 4, 5, 6, 7].map((n) => (
                <SlideRow key={n}>
                  <SlideNum>
                    {n > 2 ? n : ''}
                    {(n === 4 || n === 5) && (
                      <StarMark>
                        <Star />
                      </StarMark>
                    )}
                  </SlideNum>
                  <SlideCard $selected={n === 7}>
                    <SlideThumb n={n} />
                  </SlideCard>
                </SlideRow>
              ))}
            </SlideList>
          </SlideScroller>
        </SidePanel>

        <Main>
          <Canvas>
            <Slide>
              <SlideShape width="505" height="682" viewBox="0 0 505 682">
                <defs>
                  <radialGradient id="slideTeal" gradientUnits="userSpaceOnUse" cx="470" cy="370" r="480">
                    <stop offset="0" stopColor="#4f7f79" />
                    <stop offset="0.45" stopColor="#3e665a" />
                    <stop offset="1" stopColor="#26433a" />
                  </radialGradient>
                </defs>
                <path d="M0 0H480C498 100 505 230 505 340C505 470 496 570 480 682H0Z" fill="url(#slideTeal)" />
                <path d="M459 0H480C496 90 505 240 504 372C495 200 481 90 459 0Z" fill="#fff" opacity="0.22" />
              </SlideShape>
              <GreenTab />
              <ChartFrame>
                <ChartTitle>Q3 Totals</ChartTitle>
                <Pie3D />
                <Legend>
                  {legend.map(([name, c]) => (
                    <LegendItem key={name}>
                      <LegendSwatch $c={c} />
                      {name}
                    </LegendItem>
                  ))}
                </Legend>
                <HandleLayer>
                  {[0, 50, 100].map((x) =>
                    [0, 50, 100]
                      .filter((y) => !(x === 50 && y === 50))
                      .map((y) => <Handle key={`${x}-${y}`} $x={x} $y={y} />),
                  )}
                </HandleLayer>
              </ChartFrame>
            </Slide>
          </Canvas>
          <NotesEdge />
        </Main>
      </Body>

      <StatusBar>
        <StatusText>Slide 7 of 7</StatusText>
        <StatusText $ml={34}>English (United States)</StatusText>
        <StatusText $ml={32}>
          <svg width="25" height="25" viewBox="0 0 25 25">
            <circle cx="12" cy="4" r="3" fill="none" stroke="#666" strokeWidth="1.2" />
            <path d="M1 5c3 3 6 4 11 4s8-1 11-4M8 10c0 5 0 8-3 13M15 10c0 3 0 4 1 5M11 24l5-7 7 7M23 16l-7 8" fill="none" stroke="#666" strokeWidth="1.2" />
          </svg>
          Accessibility: Investigate
        </StatusText>
        <StatusRight>
          <ViewBox $w={38}>
            <svg width="22" height="20" viewBox="0 0 22 20">
              <path d="M11 1l4 4H7z" fill="#666" />
              <path d="M1 9h20M1 13h20M1 17h13" stroke="#777" strokeWidth="1.6" />
            </svg>
          </ViewBox>
          <StatusText>Notes</StatusText>
          <ViewBox $w={26} $ml={30}>
            <svg width="22" height="24" viewBox="0 0 22 24">
              <path d="M3 1h16a2 2 0 0 1 2 2v13a2 2 0 0 1-2 2H10l-4 5v-5H3a2 2 0 0 1-2-2V3a2 2 0 0 1 2-2z" fill="#666" />
            </svg>
          </ViewBox>
          <StatusText $ml={4}>Comments</StatusText>
          <ViewBox $w={59} $ml={17} $active>
            <svg width="22" height="26" viewBox="0 0 22 26">
              <rect x="1" y="1" width="20" height="24" rx="1.5" fill="#f4f4f4" />
              <rect x="6" y="8" width="10" height="5" fill="#a3a3a3" />
              <path d="M4 18h14" stroke="#a3a3a3" strokeWidth="2" />
            </svg>
          </ViewBox>
          <ViewBox $w={57}>
            <svg width="24" height="22" viewBox="0 0 24 22">
              <rect x="1" y="1" width="9" height="8" rx="1" fill="#555" />
              <rect x="14" y="1" width="9" height="8" rx="1" fill="#555" />
              <rect x="1" y="13" width="9" height="8" rx="1" fill="#555" />
              <rect x="14" y="13" width="9" height="8" rx="1" fill="#555" />
            </svg>
          </ViewBox>
          <ViewBox $w={57}>
            <svg width="26" height="24" viewBox="0 0 26 24">
              <path d="M13 4C10 1 5 1 1 2v18c4-1 9-1 12 2 3-3 8-3 12-2V2c-4-1-9-1-12 2zM13 4v18" fill="none" stroke="#555" strokeWidth="1.4" />
              <path d="M4 7h6M4 10h6M4 13h6M16 7h6M16 10h6M16 13h6" stroke="#555" strokeWidth="1.2" />
            </svg>
          </ViewBox>
          <ViewBox $w={57} $mr={17}>
            <svg width="24" height="24" viewBox="0 0 24 24">
              <path d="M1 2h22" stroke="#555" strokeWidth="3" />
              <path d="M3 3v13h18V3M12 16v6M7 23h10M7 9h10" fill="none" stroke="#555" strokeWidth="1.5" />
            </svg>
          </ViewBox>
          <svg width="14" height="4" viewBox="0 0 14 4">
            <rect width="14" height="4" rx="1" fill="#777" />
          </svg>
          <ZoomTrack>
            <ZoomKnob />
          </ZoomTrack>
          <svg width="13" height="13" viewBox="0 0 13 13">
            <path d="M6.5 0v13M0 6.5h13" stroke="#666" strokeWidth="3" />
          </svg>
          <StatusText $ml={32}>93%</StatusText>
          <ViewBox $w={24} $ml={33}>
            <svg width="22" height="26" viewBox="0 0 22 26">
              <rect x="1" y="1" width="20" height="24" fill="none" stroke="#666" strokeWidth="1.2" />
              <path d="M11 3v5M11 18v5M4 13h5M13 13h5" stroke="#666" strokeWidth="1.2" />
            </svg>
          </ViewBox>
          <ViewBox $w={37} />
        </StatusRight>
      </StatusBar>

      <WindowShadow />
      <ExcelWindow>
        <TitleBar>
          <Light $c="#f9504a" />
          <Light $c="#fbb62c" />
          <Light $c="#2ac940" />
          <AutoSave>AutoSave</AutoSave>
          <Toggle>
            <ToggleKnob />
          </Toggle>
          <TitleIcons>
            <svg width="22" height="24" viewBox="0 0 22 24">
              <path d="M1 0v23h7V13a3 3 0 0 1 6 0v10h7V0" fill="none" stroke="#666" strokeWidth="1.5" />
            </svg>
            <svg width="23" height="24" viewBox="0 0 23 24">
              <path d="M2 1h19v22H2zM6 14h11v9H6z" fill="none" stroke="#c8c8c8" strokeWidth="1.5" />
            </svg>
            <svg width="24" height="24" viewBox="0 0 24 24">
              <path d="M13 23H2V5h4M6 1h10v6H6zM16 5h3v5" fill="none" stroke="#666" strokeWidth="1.5" />
              <path d="M21 11l3 3-9 9-4 1 1-4z" fill="#666" />
            </svg>
            <svg width="22" height="24" viewBox="0 0 22 24">
              <path d="M2 4h14a4 4 0 0 1 3 6L2 24" fill="none" stroke="#666" strokeWidth="1.5" />
            </svg>
            <UndoChev>
              <Chevron c="#333" />
            </UndoChev>
            <svg width="23" height="24" viewBox="0 0 23 24">
              <path d="M15 4A10.5 10.5 0 1 1 7 4" fill="none" stroke="#666" strokeWidth="1.5" />
            </svg>
            <svg width="20" height="5" viewBox="0 0 20 5">
              <circle cx="2.5" cy="2.5" r="2" fill="#666" />
              <circle cx="10" cy="2.5" r="2" fill="#666" />
              <circle cx="17.5" cy="2.5" r="2" fill="#666" />
            </svg>
          </TitleIcons>
          <DocTitle>Chart in...</DocTitle>
          <svg width="23" height="24" viewBox="0 0 23 24">
            <circle cx="10" cy="8" r="8.5" fill="none" stroke="#666" strokeWidth="1.5" />
            <path d="M16 14l7 8" stroke="#666" strokeWidth="1.5" />
          </svg>
          <svg width="27" height="24" viewBox="0 0 27 24" style={{ marginLeft: 29 }}>
            <circle cx="12" cy="6" r="5" fill="none" stroke="#666" strokeWidth="1.5" />
            <path d="M3 13h18c0 5-4 8-9 8s-9-3-9-8zM18 4l8-3-2 6z" fill="none" stroke="#666" strokeWidth="1.5" />
          </svg>
        </TitleBar>

        <XTabRow>
          <XTab $active>Home</XTab>
          <XTab>Insert</XTab>
          <XTab>Draw</XTab>
          <XMore>››</XMore>
          <XActions>
            <XButton $w={163}>
              <Bubble />
              Comments
            </XButton>
            <XButton $w={139} $green>
              <ShareGlyph c="#fff" />
              Share
              <Chevron c="#fff" s={11} />
            </XButton>
          </XActions>
        </XTabRow>

        <XRibbonRow>
          <XRibbon>
            <XGroup $w={115}>
              <XIconArea>
                <ClipboardIcon />
                <ChevDrop>
                  <Chevron c="#444" />
                </ChevDrop>
              </XIconArea>
              <XLabel>Clipboard</XLabel>
            </XGroup>
            <XGroup $w={110}>
              <XIconArea>
                <svg width="38" height="46" viewBox="0 0 38 46">
                  <path d="M1 44L19 2l18 42M8 29h22" fill="none" stroke="#444" strokeWidth="2.6" />
                </svg>
                <ChevDrop>
                  <Chevron c="#444" />
                </ChevDrop>
              </XIconArea>
              <XLabel>Font</XLabel>
            </XGroup>
            <XGroup $w={122}>
              <XIconArea>
                <AlignWrap>
                  <AlignIcon />
                </AlignWrap>
                <ChevDrop>
                  <Chevron c="#444" />
                </ChevDrop>
              </XIconArea>
              <XLabel>Alignment</XLabel>
            </XGroup>
            <XGroup $w={110}>
              <XIconArea>
                <svg width="42" height="46" viewBox="0 0 42 46">
                  <ellipse cx="9" cy="10" rx="7" ry="9" fill="none" stroke="#444" strokeWidth="2" />
                  <ellipse cx="33" cy="35" rx="7" ry="9" fill="none" stroke="#444" strokeWidth="2" />
                  <path d="M32 2L10 44" stroke="#444" strokeWidth="2" />
                </svg>
                <ChevDrop>
                  <Chevron c="#444" />
                </ChevDrop>
              </XIconArea>
              <XLabel>Number</XLabel>
            </XGroup>
            <XStyleList>
              <XStyleItem>
                <StyleIcon kind="cond" />
                Conditional Formatting
                <Chevron c="#444" />
              </XStyleItem>
              <XStyleItem>
                <StyleIcon kind="table" />
                Format as Table
                <Chevron c="#444" />
              </XStyleItem>
              <XStyleItem>
                <StyleIcon kind="cell" />
                Cell Styles
                <Chevron c="#444" />
              </XStyleItem>
            </XStyleList>
            <XClippedIcon width="14" height="36" viewBox="0 0 14 36">
              <path d="M14 1H1v34h13M1 12h13M1 23h13" fill="none" stroke="#555" strokeWidth="1.5" />
            </XClippedIcon>
          </XRibbon>
          <XRibbonNext>
            <Tri dir="r" c="#666" w={8} h={11} />
          </XRibbonNext>
        </XRibbonRow>

        <FormulaBar>
          <NameBox>
            A1
            <Spinner>
              <Tri dir="u" c="#555" w={11} h={8} />
              <Tri dir="d" c="#555" w={11} h={8} />
            </Spinner>
          </NameBox>
          <FormulaTools>
            <svg width="20" height="20" viewBox="0 0 20 20">
              <path d="M2 2l16 16M18 2L2 18" stroke="#c9c9c9" strokeWidth="3" />
            </svg>
            <svg width="22" height="20" viewBox="0 0 22 20">
              <path d="M2 11l6 7L20 2" fill="none" stroke="#c9c9c9" strokeWidth="3" />
            </svg>
            <FxLabel>fx</FxLabel>
          </FormulaTools>
          <FormulaValue>State</FormulaValue>
          <FormulaDrop />
        </FormulaBar>

        <SheetWrap>
          <SheetGrid>
            <Corner />
            {['A', 'B', 'C', 'D', 'E', 'F', 'G', ''].map((c, i) => (
              <ColHead key={i} $on={i < 2}>
                {c}
              </ColHead>
            ))}
            {Array.from({ length: 10 }).map((_, r) => (
              <SheetRow key={r} r={r} />
            ))}
          </SheetGrid>
          <Selection>
            <FillHandle />
          </Selection>
          <HScroll />
        </SheetWrap>

        <SheetTabs>
          <TabArrows>
            <Tri dir="l" c="#c4c4c4" w={11} h={15} />
            <Tri dir="r" c="#c4c4c4" w={11} h={15} />
          </TabArrows>
          <SheetTab>Sheet1</SheetTab>
          <AddSheet>+</AddSheet>
        </SheetTabs>

        <XStatus>
          <XStatusText $mr={33}>Average: 80620.75</XStatusText>
          <XStatusText $mr={33}>Count: 10</XStatusText>
          <XStatusText $mr={16}>Sum: 322483</XStatusText>
          <XView $active>
            <svg width="22" height="22" viewBox="0 0 22 22">
              <rect x="1" y="1" width="20" height="20" fill="#fff" />
              <path d="M1 8h20M1 14h20M8 1v20M14 1v20" stroke="#a9a9a9" strokeWidth="1.5" />
            </svg>
          </XView>
          <XView>
            <svg width="22" height="22" viewBox="0 0 22 22">
              <rect x="1" y="1" width="20" height="20" fill="none" stroke="#777" strokeWidth="1.5" />
              <path d="M6 6h10v10H6zM6 9.5h10M6 13h10" fill="none" stroke="#777" strokeWidth="1.2" />
            </svg>
          </XView>
          <XView>
            <svg width="22" height="22" viewBox="0 0 22 22">
              <path d="M1 1h20v15H1zM1 16v5M21 16v5M9 1v11h5V1" fill="none" stroke="#777" strokeWidth="1.5" />
            </svg>
          </XView>
        </XStatus>
      </ExcelWindow>
      <PurpleFrame />
    </Page>
  )
}

export default App
